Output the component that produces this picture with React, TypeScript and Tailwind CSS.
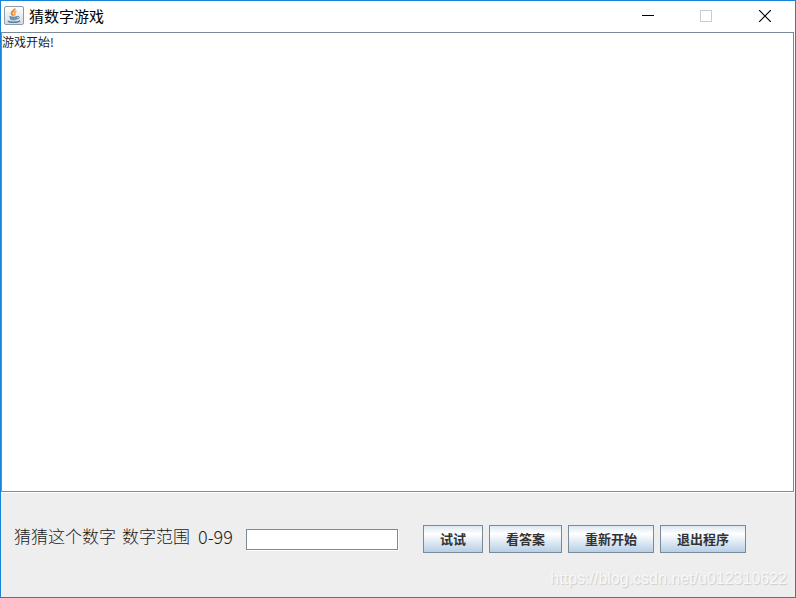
//App.tsx
import React from "react";

const JavaIcon: React.FC = () => (
	<svg width="20" height="20" viewBox="0 0 20 20" fill="none" aria-hidden="true">
		<defs>
			<linearGradient id="tile" x1="0" y1="0" x2="0" y2="1">
				<stop offset="0" stopColor="#ffffff" />
				<stop offset="1" stopColor="#d5dbe2" />
			</linearGradient>
		</defs>
		<rect x="0.5" y="0.5" width="19" height="18" rx="1.5" fill="url(#tile)" stroke="#8a9aa9" />
		<path d="M10.5 2.5c1 2-3.500 2.800-3 5 .3 1 1.500 1.500 2 2.200" stroke="#e8862f" strokeWidth="2" />
		<path d="M12.5 5c-2 1-2.500 1.700-1.700 2.700.5.8.2 1.300-.4 1.800" stroke="#f0a35c" strokeWidth="1.600" />
		<path d="M5.5 10.500c1 1 7 1 8 0l-1 3.500c-1 .8-5 .8-6 0z" fill="#9cb6ca" />
		<path d="M5.5 10.500c1 1 7 1 8 0M6.200 12.500c1.500.8 5 .8 6.500 0" stroke="#557f9f" strokeWidth="1.200" />
		<path d="M13.500 10.500c2.800-.5 2.300 2.200-.7 2.500" stroke="#557f9f" />
		<path d="M4 14.800c1 2 10.500 2 12 0" stroke="#557f9f" strokeWidth="1.500" />
	</svg>
);

const actions = ["试试", "看答案", "重新开始", "退出程序"];

const App: React.FC = () => {
	return (
		<main className="relative flex h-screen flex-col border border-[#1883d7] bg-[#eeeeee] font-['Noto_Sans_CJK_SC',sans-serif] text-[#333333]">
			{/* Title bar */}
			<header className="flex h-[31px] shrink-0 items-center bg-white pb-px pl-[3px] text-black">
				<JavaIcon />
				<h1 className="ml-[5px] flex-1 text-[15px] leading-5">猜数字游戏</h1>
				<button type="button" aria-label="最小化" className="flex h-full w-[58px] items-center justify-center">
					<svg width="12" height="12" shapeRendering="crispEdges">
						<path d="M0 5.5h12" stroke="#000" />
					</svg>
				</button>
				<button type="button" aria-label="最大化" disabled className="flex h-full w-[58px] items-center justify-center">
					<svg width="12" height="12" fill="none" shapeRendering="crispEdges">
						<rect x="0.5" y="0.5" width="11" height="11" stroke="#cccccc" />
					</svg>
				</button>
				<button type="button" aria-label="关闭" className="flex h-full w-[60px] items-center justify-center">
					<svg width="12" height="12">
						<path d="M0 0l12 12M12 0L0 12" stroke="#000" strokeWidth="1.2" />
					</svg>
				</button>
			</header>

			{/* Game log */}
			<div className="flex min-h-0 flex-1 bg-white pr-px">
				<textarea
					aria-label="游戏记录"
					readOnly
					defaultValue="游戏开始!"
					className="w-full resize-none border border-[#7a8a99] bg-white text-[12px] leading-[18px] text-[#222222] outline-none"
				/>
			</div>

			{/* Guess form */}
			<form
				className="flex h-[105px] shrink-0 items-center border-t border-white pb-3 pl-[13px]"
				onSubmit={(e) => e.preventDefault()}
			>
				<label htmlFor="guess" className="flex items-center pb-[6px] text-[17px] font-light leading-6 text-[#1a1a1a] whitespace-nowrap">
					<span>猜猜这个数字</span>
					<span className="ml-[6px]">数字范围</span>
					<span className="ml-2 text-[18px]">0-99</span>
				</label>
				<input
					id="guess"
					type="text"
					className="ml-[13px] h-[21px] w-[152px] border border-[#7a8a99] bg-white px-1 text-[12px] shadow-[1px_1px_0_#ffffff] outline-none"
				/>
				<div className="ml-[25px] flex gap-[6px]">
					{actions.map((text) => (
						<button
							key={text}
							type="button"
							className="h-7 border border-[#7a8a99] bg-linear-to-b from-[#dde8f3] via-white via-30% to-[#b8cfe5] px-4 text-[13px] font-bold leading-5 whitespace-nowrap"
						>
							{text}
						</button>
					))}
				</div>
			</form>

			<p className="pointer-events-none absolute right-2 bottom-2 font-['Liberation_Sans',sans-serif] text-[16px] leading-5 text-[#f8f8f8] [text-shadow:1px_1px_1px_#cccccc]">
				https://blog.csdn.net/u012310622
			</p>
		</main>
	);
};

export default App;
